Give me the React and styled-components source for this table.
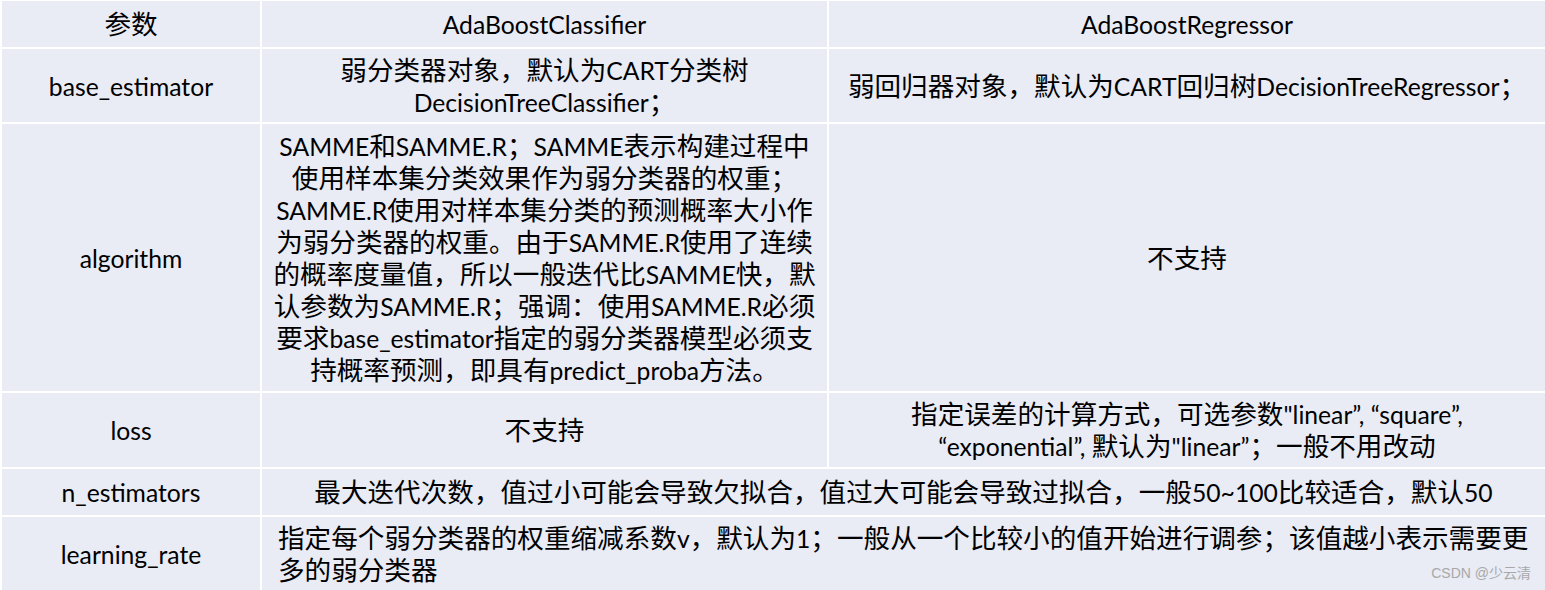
import React from "react";
import styled, { createGlobalStyle } from "styled-components";

const GlobalStyle = createGlobalStyle`
    html, body {
        margin: 0;
        padding: 0;
        background: #ffffff;
    }
`;

const rows = [
    {
        name: "base_estimator",
        cls: ["弱分类器对象，默认为CART分类树", "DecisionTreeClassifier；"],
        reg: ["弱回归器对象，默认为CART回归树DecisionTreeRegressor；"],
    },
    {
        name: "algorithm",
        cls: [
            "SAMME和SAMME.R；SAMME表示构建过程中",
            "使用样本集分类效果作为弱分类器的权重；",
            "SAMME.R使用对样本集分类的预测概率大小作",
            "为弱分类器的权重。由于SAMME.R使用了连续",
            "的概率度量值，所以一般迭代比SAMME快，默",
            "认参数为SAMME.R；强调：使用SAMME.R必须",
            "要求base_estimator指定的弱分类器模型必须支",
            "持概率预测，即具有predict_proba方法。",
        ],
        reg: ["不支持"],
    },
    {
        name: "loss",
        cls: ["不支持"],
        reg: [
            "指定误差的计算方式，可选参数\"linear”, “square”,",
            "“exponential”, 默认为\"linear”；一般不用改动",
        ],
    },
];

// latin runs get a slightly smaller size so they sit closer to Calibri widths
const Text = ({ children }) =>
    String(children)
        .split(/([\u0020-\u007E\u201C\u201D]+)/)
        .filter(Boolean)
        .map((part, i) =>
            /^[\u0020-\u007E\u201C\u201D]+$/.test(part) ? (
                <Latin key={i}>{part}</Latin>
            ) : (
                <React.Fragment key={i}>{part}</React.Fragment>
            )
        );

const Lines = ({ lines }) =>
    lines.map((line, i) => (
        <Line key={i}>
            <Text>{line}</Text>
        </Line>
    ));

const App = () => {
    return (
        <>
            <GlobalStyle />
            <Page>
                <Table>
                    <Cell>
                        <Lines lines={["参数"]} />
                    </Cell>
                    <Cell>
                        <Lines lines={["AdaBoostClassifier"]} />
                    </Cell>
                    <Cell>
                        <Lines lines={["AdaBoostRegressor"]} />
                    </Cell>

                    {rows.map((row) => (
                        <React.Fragment key={row.name}>
                            <Cell>
                                <Lines lines={[row.name]} />
                            </Cell>
                            <Cell>
                                <Lines lines={row.cls} />
                            </Cell>
                            <Cell>
                                <Lines lines={row.reg} />
                            </Cell>
                        </React.Fragment>
                    ))}

                    <Cell>
                        <Lines lines={["n_estimators"]} />
                    </Cell>
                    <Cell $span={2}>
                        <Lines
                            lines={[
                                "最大迭代次数，值过小可能会导致欠拟合，值过大可能会导致过拟合，一般50~100比较适合，默认50",
                            ]}
                        />
                    </Cell>

                    <Cell>
                        <Lines lines={["learning_rate"]} />
                    </Cell>
                    <Cell $span={2} $left>
                        <Lines
                            lines={[
                                "指定每个弱分类器的权重缩减系数v，默认为1；一般从一个比较小的值开始进行调参；该值越小表示需要更",
                                "多的弱分类器",
                            ]}
                        />
                    </Cell>
                </Table>
                <Watermark>CSDN @少云清</Watermark>
            </Page>
        </>
    );
};

export default App;

const Page = styled.div`
    position: relative;
    width: 1545px;
    height: 590px;
    overflow: hidden;
`;

const Table = styled.div`
    display: grid;
    grid-template-columns: 258px 565px 716px;
    grid-template-rows: 46px 73px 267px 74px 46px 73px;
    gap: 2px;
    box-sizing: border-box;
    width: 1545px;
    height: 590px;
    padding: 1px 0 0 2px;
    background: #ffffff;
`;

const Cell = styled.div`
    grid-column: span ${(p) => p.$span || 1};
    display: flex;
    flex-direction: column;
    justify-content: center;
    align-items: ${(p) => (p.$left ? "flex-start" : "center")};
    padding: ${(p) => (p.$left ? "0 16px" : "0")};
    background: #e9ebf5;
    color: #000;
    font-family: "Lato", "Noto Sans CJK SC", sans-serif;
    font-size: 26.6px;
    line-height: 32px;
    text-align: ${(p) => (p.$left ? "left" : "center")};
    white-space: nowrap;
    overflow: hidden;
`;

const Line = styled.div`
    height: 32px;
    white-space: nowrap;
`;

const Latin = styled.span`
    font-size: 24.7px;
    line-height: 1;
`;

const Watermark = styled.div`
    position: absolute;
    right: 14px;
    bottom: 8px;
    font-family: "Liberation Sans", "Noto Sans CJK SC", sans-serif;
    font-size: 14px;
    color: #a8a8a8;
`;
